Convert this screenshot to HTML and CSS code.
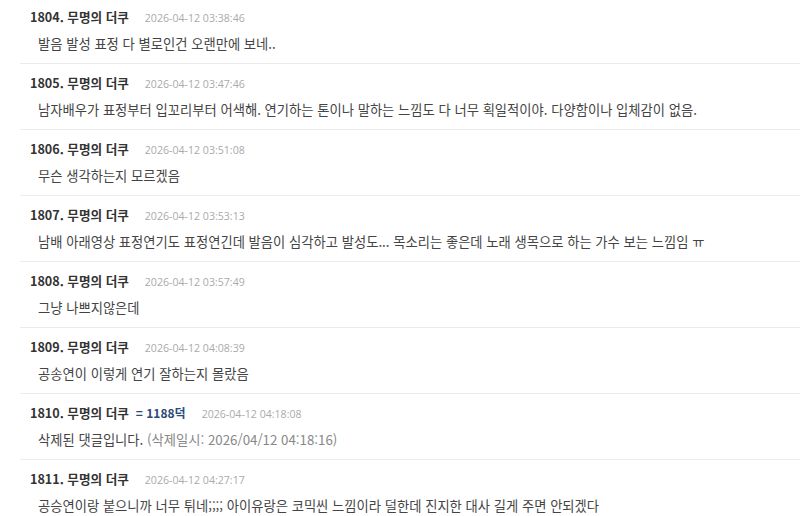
FILE: index.html
```html
<!DOCTYPE html>
<html lang="ko">
<head>
<meta charset="utf-8">
<link rel="stylesheet" href="styles.css">
</head>
<body>
<ul class="comments">
  <li class="comment">
    <div class="meta"><span class="name">1804. 무명의 더쿠</span><span class="date">2026-04-12 03:38:46</span></div>
    <div class="body">발음 발성 표정 다 별로인건 오랜만에 보네..</div>
  </li>
  <li class="comment">
    <div class="meta"><span class="name">1805. 무명의 더쿠</span><span class="date">2026-04-12 03:47:46</span></div>
    <div class="body">남자배우가 표정부터 입꼬리부터 어색해. 연기하는 톤이나 말하는 느낌도 다 너무 획일적이야. 다양함이나 입체감이 없음.</div>
  </li>
  <li class="comment">
    <div class="meta"><span class="name">1806. 무명의 더쿠</span><span class="date">2026-04-12 03:51:08</span></div>
    <div class="body">무슨 생각하는지 모르겠음</div>
  </li>
  <li class="comment">
    <div class="meta"><span class="name">1807. 무명의 더쿠</span><span class="date">2026-04-12 03:53:13</span></div>
    <div class="body">남배 아래영상 표정연기도 표정연긴데 발음이 심각하고 발성도... 목소리는 좋은데 노래 생목으로 하는 가수 보는 느낌임 ㅠ</div>
  </li>
  <li class="comment">
    <div class="meta"><span class="name">1808. 무명의 더쿠</span><span class="date">2026-04-12 03:57:49</span></div>
    <div class="body">그냥 나쁘지않은데</div>
  </li>
  <li class="comment">
    <div class="meta"><span class="name">1809. 무명의 더쿠</span><span class="date">2026-04-12 04:08:39</span></div>
    <div class="body">공송연이 이렇게 연기 잘하는지 몰랐음</div>
  </li>
  <li class="comment">
    <div class="meta"><span class="name">1810. 무명의 더쿠</span><span class="reply">= 1188덕</span><span class="date">2026-04-12 04:18:08</span></div>
    <div class="body">삭제된 댓글입니다. <span class="deleted">(삭제일시: 2026/04/12 04:18:16)</span></div>
  </li>
  <li class="comment">
    <div class="meta"><span class="name">1811. 무명의 더쿠</span><span class="date">2026-04-12 04:27:17</span></div>
    <div class="body">공승연이랑 붙으니까 너무 튀네;;;; 아이유랑은 코믹씬 느낌이라 덜한데 진지한 대사 길게 주면 안되겠다</div>
  </li>
</ul>
</body>
</html>
```

FILE: styles.css
```css
html, body {
  margin: 0;
  padding: 0;
  background: #ffffff;
}
body {
  font-family: "Noto Sans CJK KR", "Noto Sans", sans-serif;
  font-size: 13px;
  color: #333;
  overflow: hidden;
}
.comments {
  list-style: none;
  margin: -3px 0 0 20px;
  padding: 0;
}
.comment {
  border-top: 1px solid #ebebeb;
  padding: 8px 10px 7px;
  height: 50px;
}
.meta {
  display: flex;
  align-items: baseline;
  line-height: 22px;
  height: 22px;
  white-space: nowrap;
}
.name {
  font-weight: bold;
  color: #333;
  font-size: 12.6px;
}
.reply {
  font-weight: bold;
  color: #2b4a76;
  margin-left: 7px;
  font-size: 12px;
}
.date {
  font-family: "Open Sans", "Noto Sans CJK KR", sans-serif;
  color: #aaa;
  font-size: 10.6px;
  margin-left: 16px;
}
.body {
  margin-top: 5px;
  padding-left: 8px;
  line-height: 22px;
  font-size: 13.3px;
  color: #444;
  white-space: nowrap;
}
.deleted {
  color: #888;
}
```
